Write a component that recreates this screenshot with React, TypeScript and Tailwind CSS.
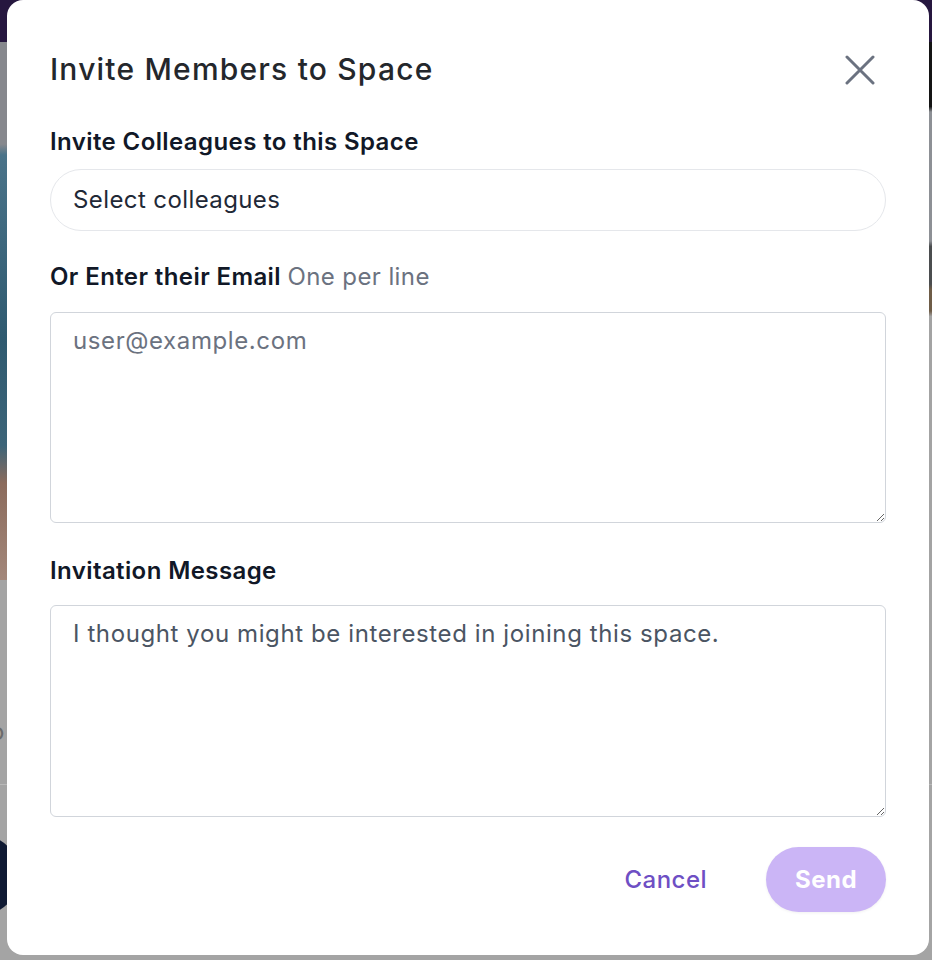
export default function App() {
  return (
    <div className="relative h-[960px] w-[932px] overflow-hidden font-['Inter','Noto_Sans',sans-serif]">
      {/* backdrop page, dimmed */}
      <div className="flex h-full flex-col bg-[#a4a4a4]">
        <div className="h-[42px] bg-[#26173f]" />
        <div className="flex h-[538px]">
          <div className="flex-1 bg-[linear-gradient(to_bottom,#86888d_0%,#86888d_19%,#4a7389_21%,#2f5a70_55%,#3c6478_75%,#8b6b5c_82%,#a3877a_100%)]" />
          <div className="w-[40px] bg-[linear-gradient(to_bottom,#141414_0%,#141414_12%,#8d9095_13%,#8d9095_37%,#4b4d4f_38%,#4b4d4f_45%,#6e5c47_46%,#6e5c47_50%,#a3a3a3_51%,#a3a3a3_100%)]" />
        </div>
        <div className="flex h-[205px] items-center border-b border-[#b9b9b9] pt-[100px] text-[24px] text-[#6b6b6b]">
          <span className="-ml-[10px]">o</span>
        </div>
        <div className="flex flex-1 items-start pt-[50px]">
          <div className="-ml-[60px] h-[80px] w-[80px] rounded-full bg-[#0f1a33]" />
        </div>
      </div>

      {/* modal */}
      <div
        role="dialog"
        className="absolute left-[7px] top-0 flex h-[955px] w-[922px] flex-col rounded-[16px] bg-white px-[43px] pt-[47px] tracking-[0.025em]"
      >
        <div className="flex h-[45px] items-center justify-between">
          <h2 className="text-[30px] font-medium leading-[45px] tracking-[0.04em] text-[#24272c]">
            Invite Members to Space
          </h2>
          <button className="mr-[11px] flex h-[30px] w-[30px] items-center justify-center text-[#6b7280]">
            <svg width="30" height="30" viewBox="0 0 30 30" fill="none">
              <path
                d="M2 2 L28 28 M28 2 L2 28"
                stroke="currentColor"
                strokeWidth="3"
                strokeLinecap="round"
              />
            </svg>
          </button>
        </div>

        <label className="mt-[32px] text-[24px] font-semibold leading-[36px] text-[#111827]">
          Invite Colleagues to this Space
        </label>
        <div className="mt-[9px] flex h-[62px] items-center rounded-full border border-[#e5e7eb] px-[22px] text-[24px] text-[#1f2937]">
          Select colleagues
        </div>

        <label className="mt-[28px] text-[24px] font-semibold leading-[36px] text-[#111827]">
          Or Enter their Email <span className="font-normal text-[#6b7280]">One per line</span>
        </label>
        <textarea
          placeholder="user@example.com"
          className="mt-[17px] h-[211px] rounded-[6px] border border-[#d1d5db] px-[22px] py-[10px] text-[24px] leading-[36px] tracking-[0.025em] text-[#374151] outline-none placeholder:text-[#6b7280]"
        />

        <label className="mt-[30px] text-[24px] font-semibold leading-[36px] text-[#111827]">
          Invitation Message
        </label>
        <textarea
          defaultValue="I thought you might be interested in joining this space."
          className="mt-[16px] h-[212px] rounded-[6px] border border-[#d1d5db] px-[22px] py-[10px] text-[24px] leading-[36px] tracking-[0.025em] text-[#4b5563] outline-none"
        />

        <div className="mt-[30px] flex items-center justify-end">
          <button className="mr-[59px] text-[24px] font-medium tracking-[0.02em] text-[#6e4fc4]">Cancel</button>
          <button
            disabled
            className="flex h-[65px] w-[120px] items-center justify-center rounded-full bg-[#cbb5f6] text-[24px] font-bold tracking-[0.02em] text-white shadow-[0_1px_3px_rgba(0,0,0,0.06)]"
          >
            Send
          </button>
        </div>
      </div>
    </div>
  );
}
